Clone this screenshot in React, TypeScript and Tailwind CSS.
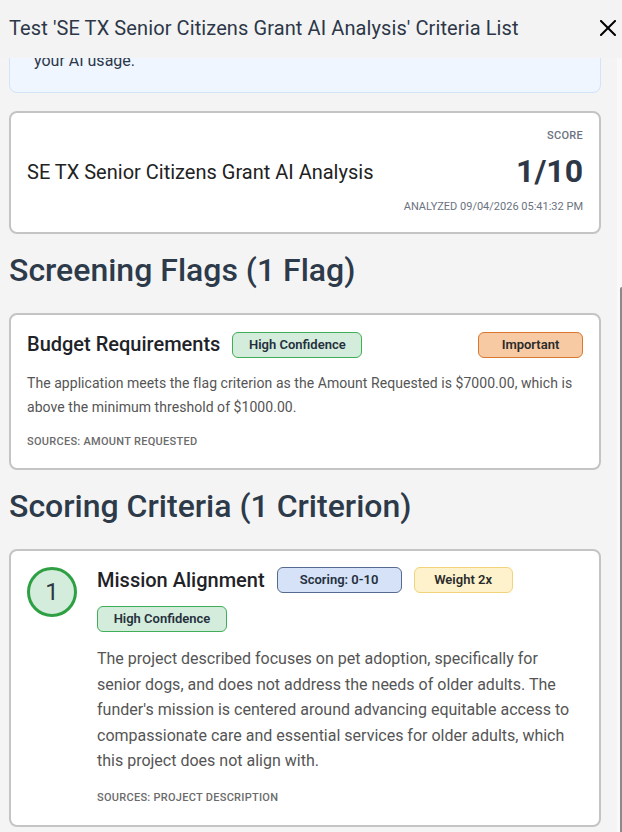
import React from 'react';

const FONT = { fontFamily: 'Roboto, "Noto Sans", Arial, sans-serif' };

interface BadgeProps {
  tone: 'green' | 'orange' | 'blue' | 'yellow';
  width: string;
  children: React.ReactNode;
}

const Badge: React.FC<BadgeProps> = ({ tone, width, children }) => {
  const tones = {
    green: 'bg-[#d4ecdb] border-[#3fae56] text-[#25303d]',
    orange: 'bg-[#f7caa3] border-[#d9782e] text-[#2b2b2b]',
    blue: 'bg-[#d5e2f7] border-[#56698e] text-[#25303d]',
    yellow: 'bg-[#fdf2cc] border-[#f2d27c] text-[#2b2b2b]',
  };
  return (
    <span
      className={`${tones[tone]} ${width} h-[26px] shrink-0 rounded-md border text-[13px] font-semibold flex items-center justify-center`}
    >
      {children}
    </span>
  );
};

const ScoreCard = () => (
  <div className="bg-white border-2 border-[#c4c4c4] rounded-lg px-4 pt-4 pb-[18px] flex items-center justify-between">
    <div className="text-[20px] text-[#222]">SE TX Senior Citizens Grant AI Analysis</div>
    <div className="flex flex-col items-end">
      <div className="text-[11px] leading-[14px] font-medium tracking-wide text-[#6b7280]">SCORE</div>
      <div className="mt-[10px] text-[32px] leading-[36px] font-bold text-[#2d3748]">1/10</div>
      <div className="mt-[11px] text-[11px] leading-[14px] text-[#6b7280]">
        ANALYZED 09/04/2026 05:41:32 PM
      </div>
    </div>
  </div>
);

const FlagCard = () => (
  <div className="bg-white border-2 border-[#c4c4c4] rounded-lg px-4 pt-4 pb-[19px]">
    <div className="flex items-center justify-between h-[27px]">
      <div className="flex items-center gap-3">
        <span className="text-[20px] leading-[27px] font-medium text-[#1f2328]">Budget Requirements</span>
        <Badge tone="green" width="w-[130px]">High Confidence</Badge>
      </div>
      <Badge tone="orange" width="w-[105px]">Important</Badge>
    </div>
    <p className="mt-[13px] text-[14px] tracking-[0.05px] leading-[24px] text-[#555]">
      The application meets the flag criterion as the Amount Requested is $7000.00, which is above the
      minimum threshold of $1000.00.
    </p>
    <div className="mt-4 text-[11px] leading-[14px] font-medium tracking-wide text-[#6b6b6b]">
      SOURCES: AMOUNT REQUESTED
    </div>
  </div>
);

const CriterionCard = () => (
  <div className="bg-white border-2 border-[#c4c4c4] rounded-lg px-4 pt-4 pb-5 flex gap-5">
    <div className="w-[50px] h-[50px] shrink-0 rounded-full border-[3px] border-[#2ea043] bg-[#d4ecdb] flex items-center justify-center text-[24px] text-[#2d3748]">
      1
    </div>
    <div className="flex-1 min-w-0">
      <div className="flex flex-wrap items-center gap-x-3 gap-y-[13px]">
        <span className="text-[20px] leading-[26px] font-medium text-[#1f2328]">Mission Alignment</span>
        <Badge tone="blue" width="w-[125px]">Scoring: 0-10</Badge>
        <Badge tone="yellow" width="w-[99px]">Weight 2x</Badge>
        <Badge tone="green" width="w-[130px]">High Confidence</Badge>
      </div>
      <p className="mt-[14px] text-[16px] leading-[25.5px] text-[#555]">
        The project described focuses on pet adoption, specifically for senior dogs, and does not address
        the needs of older adults. The funder's mission is centered around advancing equitable access to
        compassionate care and essential services for older adults, which this project does not align with.
      </p>
      <div className="mt-[17px] text-[11px] leading-[14px] font-medium tracking-wide text-[#6b6b6b]">
        SOURCES: PROJECT DESCRIPTION
      </div>
    </div>
  </div>
);

export default function App() {
  return (
    <div style={FONT} className="w-[622px] h-[832px] bg-[#f4f4f4] flex flex-col overflow-hidden">
      {/* Header */}
      <div className="h-[58px] shrink-0 pl-[9px] pr-[6px] pb-[3px] flex items-center justify-between bg-[#f3f3f3] relative z-10">
        <h1 className="text-[20px] tracking-[0.1px] text-[#2d3748]">
          Test 'SE TX Senior Citizens Grant AI Analysis' Criteria List
        </h1>
        <svg width="16" height="16" viewBox="0 0 16 16" className="text-black">
          <path d="M1 1 15 15M15 1 1 15" stroke="currentColor" strokeWidth="2" strokeLinecap="square" />
        </svg>
      </div>

      {/* Scrolled body */}
      <div className="flex-1 flex min-h-0">
        <div className="flex-1 overflow-hidden pl-[9px] pr-4">
          <div className="-mt-[26px] bg-[#eff6ff] border border-[#d3e3f8] rounded-lg pl-6 pr-6 pt-4 pb-[19px]">
            <p className="text-[16px] leading-[24px] text-[#2d3748]">your AI usage.</p>
          </div>

          <div className="mt-[18px]">
            <ScoreCard />
          </div>

          <h2 className="mt-[18px] text-[32px] leading-[36px] font-medium text-[#2d3a4a]">Screening Flags (1 Flag)</h2>
          <div className="mt-[25px]">
            <FlagCard />
          </div>

          <h2 className="mt-[18px] text-[32px] leading-[36px] font-medium text-[#2d3a4a]">
            Scoring Criteria (1 Criterion)
          </h2>
          <div className="mt-[25px]">
            <CriterionCard />
          </div>
        </div>

        {/* Scrollbar */}
        <div className="w-[5px] shrink-0 bg-[#f9f9f9] flex flex-col items-end">
          <div className="h-[229px]" />
          <div className="w-[2px] flex-1 bg-[#8a8a8a] rounded-tl-sm" />
        </div>
      </div>
    </div>
  );
}
